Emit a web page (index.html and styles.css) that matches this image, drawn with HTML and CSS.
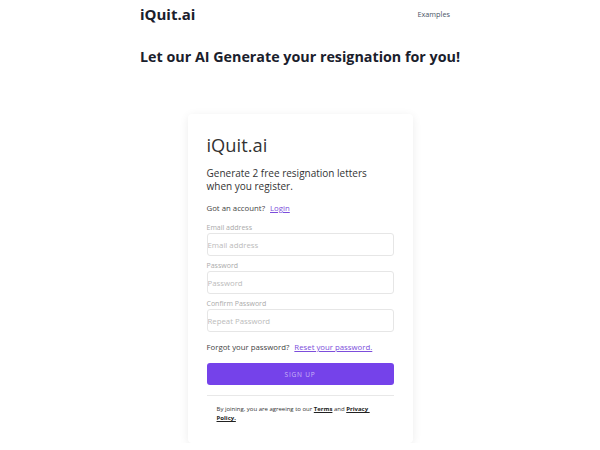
FILE: index.html
```html
<!DOCTYPE html>
<html>
<head>
<meta charset="utf-8">
<link rel="stylesheet" href="styles.css">
</head>
<body>
<header class="topbar">
  <div class="logo">iQuit.ai</div>
  <nav class="nav"><a href="#" class="nav-link">Examples</a></nav>
</header>
<main class="main">
  <h1 class="headline">Let our AI Generate your resignation for you!</h1>
  <div class="card">
    <div class="card-title">iQuit.ai</div>
    <p class="card-sub">Generate 2 free resignation letters when you register.</p>
    <p class="line">Got an account? <a href="#" class="link">Login</a></p>
    <form class="form">
      <label class="label">Email address</label>
      <input class="input" type="email" placeholder="Email address">
      <label class="label">Password</label>
      <input class="input" type="password" placeholder="Password">
      <label class="label">Confirm Password</label>
      <input class="input" type="password" placeholder="Repeat Password">
    </form>
    <p class="line forgot">Forgot your password? <a href="#" class="link">Reset your password.</a></p>
    <button class="btn" type="button">SIGN UP</button>
    <hr class="divider">
    <div class="terms">
      <span class="tline">By joining, you are agreeing to our <a href="#" class="tlink">Terms</a> and <a href="#" class="tlink">Privacy&nbsp;</a></span>
      <span class="tline"><a href="#" class="tlink">Policy.</a></span>
    </div>
  </div>
</main>
</body>
</html>
```
FILE: styles.css
```css
* { box-sizing: border-box; }
html, body { margin: 0; padding: 0; background: #fff; }
body { font-family: "Open Sans", "Liberation Sans", sans-serif; color: #333; }
.topbar {
  width: 320px; margin: 0 auto; height: 28px;
  display: flex; align-items: center; justify-content: space-between;
}
.logo { font-size: 15px; font-weight: 700; color: #1a202c; }
.nav { padding-right: 10px; font-size: 7.3px; line-height: 10px; }
.nav-link { color: #4a5568; text-decoration: none; }
.main { display: flex; flex-direction: column; align-items: center; }
.headline {
  margin: 20px 0 0; font-size: 14.3px; line-height: 18px; font-weight: 700; color: #1a202c;
  width: 320px; white-space: nowrap;
}
.card {
  margin-top: 48px; width: 225px; padding: 19px 19px 20px;
  background: #fff; border-radius: 4px;
  box-shadow: 0 2px 10px rgba(0,0,0,0.08);
}
.card-title { font-size: 18.3px; font-weight: 400; color: #333; line-height: 24px; }
.card-sub { margin: 10px 0 0; font-size: 10px; line-height: 13px; color: #333; }
.line { margin: 9px 0 0; font-size: 7.8px; line-height: 12px; color: #444; }
.link { color: #7c4ddb; text-decoration: underline; margin-left: 3px; }
.form { display: flex; flex-direction: column; margin-top: 4px; }
.label { font-size: 7px; color: #aaa; line-height: 10px; margin-top: 5px; }
.input {
  height: 23px; border: 1px solid #e6e6e6; border-radius: 3px;
  padding: 0; font-family: inherit; font-size: 7.8px; color: #333; outline: none;
}
.input::placeholder { color: #bbb; }
.forgot { margin-top: 9px; }
.btn {
  display: block; width: 100%; height: 22px; margin-top: 10px;
  background: #7542ea; border: none; border-radius: 3px;
  color: #c9b5f7; font-family: inherit; font-size: 6.5px; letter-spacing: 0.8px;
}
.divider { border: none; border-top: 1px solid #e8e8e8; margin: 10px 0 0; }
.terms {
  margin: 9px 10px 0; font-size: 6px; line-height: 9px; color: #333;
  display: flex; flex-direction: column;
}
.tline { display: block; white-space: nowrap; }
.tlink { color: #222; font-weight: 700; text-decoration: underline; }
```
